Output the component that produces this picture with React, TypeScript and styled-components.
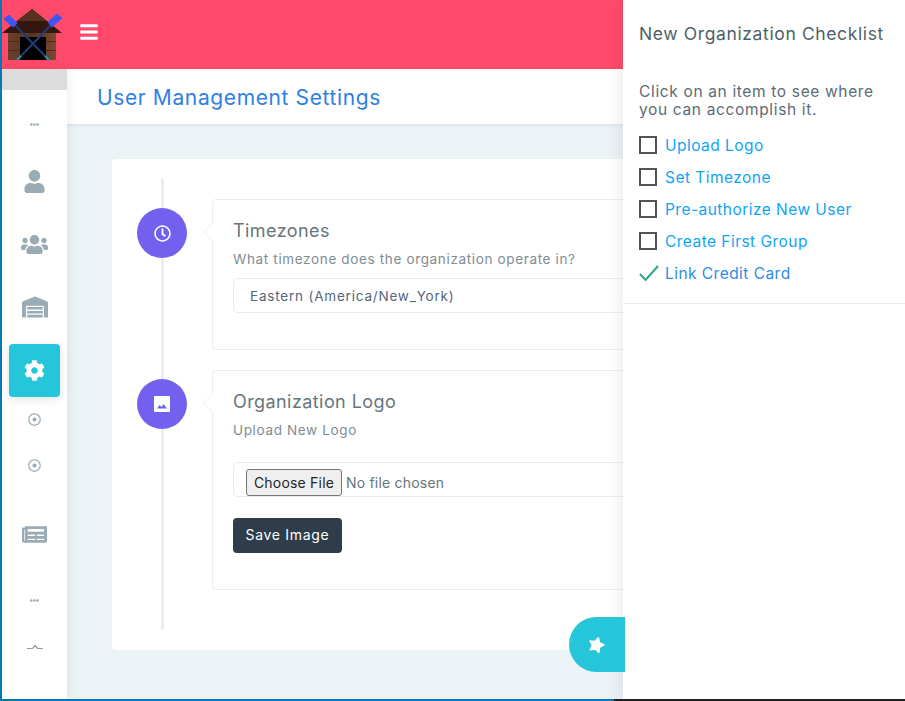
import React from "react";
import styled, { createGlobalStyle } from "styled-components";
import {
  FaUser,
  FaUsers,
  FaWarehouse,
  FaCog,
  FaNewspaper,
  FaRegDotCircle,
  FaRegClock,
  FaStar,
  FaBars,
  FaEllipsisH,
} from "react-icons/fa";

const Global = createGlobalStyle`
  html, body { margin: 0; padding: 0; background: #fff; }
  * { box-sizing: border-box; }
  body { font-family: Inter, "Open Sans", "Liberation Sans", sans-serif; color: #67757c; }
`;

const Frame = styled.div`
  position: relative;
  width: 905px;
  height: 701px;
  overflow: hidden;
  display: flex;
  flex-direction: column;
  border-left: 2px solid #0b76b4;
`;
const Screen = styled.div`
  flex: 1;
  min-height: 0;
  display: flex;
  flex-direction: column;
`;
const TopBar = styled.header`
  height: 69px;
  flex: none;
  background: #ff4a6b;
  display: flex;
  align-items: center;
`;
const LogoBox = styled.div`
  width: 65px;
  height: 69px;
  flex: none;
  display: flex;
  align-items: flex-start;
`;
const Burger = styled.span`
  display: flex;
  margin: 0 0 5px 12px;
  color: #fff;
  font-size: 20px;
`;
const Body = styled.div`
  flex: 1;
  min-height: 0;
  display: flex;
`;
const Sidebar = styled.nav`
  width: 65px;
  flex: none;
  background: #fff;
  display: flex;
  flex-direction: column;
  align-items: center;
  box-shadow: 1px 0 12px rgba(0, 0, 0, 0.08);
  position: relative;
  z-index: 1;
`;
const SideBand = styled.div`
  align-self: stretch;
  height: 21px;
  flex: none;
  background: #dcdcdc;
`;
const SideSlot = styled.div<{ $h: number; $size: number }>`
  height: ${(p) => p.$h}px;
  flex: none;
  display: flex;
  align-items: center;
  justify-content: center;
  color: #99abb4;
  font-size: ${(p) => p.$size}px;
`;
const ActiveItem = styled.div`
  width: 51px;
  height: 53px;
  flex: none;
  border-radius: 4px;
  background: #26c6da;
  color: #fff;
  font-size: 21px;
  display: flex;
  align-items: center;
  justify-content: center;
  box-shadow: 0 2px 8px rgba(0, 0, 0, 0.12);
`;
const Main = styled.main`
  flex: 1;
  min-width: 0;
  background: #ebf3f6;
  display: flex;
  flex-direction: column;
`;
const TitleBar = styled.div`
  height: 55px;
  flex: none;
  background: #fff;
  padding: 1px 0 0 30px;
  display: flex;
  align-items: center;
  box-shadow: 0 1px 3px rgba(0, 0, 0, 0.08);
`;
const PageTitle = styled.h1`
  margin: 0;
  font-size: 21px;
  font-weight: 400;
  letter-spacing: 0.62px;
  color: #2f80e4;
  white-space: nowrap;
`;
const Canvas = styled.div`
  padding: 35px 0 0 45px;
`;
const Sheet = styled.section`
  width: 700px;
  height: 491px;
  background: #fff;
  border-radius: 4px;
  padding: 20px 0 20px 25px;
`;
const Timeline = styled.div`
  display: flex;
  flex-direction: column;
  gap: 20px;
  height: 451px;
  position: relative;
  padding-top: 20px;
  &::before {
    content: "";
    position: absolute;
    left: 24px;
    top: 0;
    bottom: 0;
    width: 3px;
    background: #e9edf2;
  }
`;
const Entry = styled.article`
  display: flex;
  align-items: flex-start;
  position: relative;
`;
const Badge = styled.div`
  width: 50px;
  height: 50px;
  flex: none;
  margin-top: 9px;
  border-radius: 50%;
  background: #7460ee;
  color: #fff;
  display: flex;
  align-items: center;
  justify-content: center;
  font-size: 17px;
  position: relative;
  z-index: 1;
`;
const EntryCard = styled.div<{ $h: number }>`
  margin-left: 25px;
  flex: 1;
  height: ${(p) => p.$h}px;
  background: #fff;
  border: 1px solid #e9edf2;
  border-radius: 4px;
  padding: 19px 20px;
  position: relative;
  &::before {
    content: "";
    position: absolute;
    left: -7px;
    top: 25px;
    width: 13px;
    height: 13px;
    background: #fff;
    border-left: 1px solid #f1f3f6;
    border-bottom: 1px solid #f1f3f6;
    transform: rotate(45deg);
  }
`;
const CardTitle = styled.h2`
  margin: 0;
  font-size: 18px;
  line-height: 24px;
  font-weight: 400;
  letter-spacing: 0.42px;
  color: #67757c;
  white-space: nowrap;
`;
const CardNote = styled.p<{ $mb: number }>`
  margin: 6px 0 ${(p) => p.$mb}px;
  font-size: 13.5px;
  line-height: 20px;
  letter-spacing: 0.65px;
  color: #7f8c94;
  white-space: nowrap;
`;
const SelectField = styled.div`
  height: 35px;
  border: 1px solid #e9edf2;
  border-radius: 4px;
  padding-left: 16px;
  display: flex;
  align-items: center;
  font-size: 13.5px;
  letter-spacing: 0.8px;
  color: #54667a;
  white-space: nowrap;
`;
const FileField = styled.div`
  height: 35px;
  border: 1px solid #e9edf2;
  border-radius: 4px;
  padding: 6px 0 0 12px;
  font-size: 14px;
  color: #67757c;
  input {
    font-family: Inter, sans-serif;
    font-size: 14px;
    letter-spacing: 0.2px;
    color: #67757c;
    width: 300px;
    white-space: nowrap;
  }
  input::file-selector-button {
    font-family: Inter, sans-serif;
    font-size: 14px;
    letter-spacing: 0.2px;
    height: 27px;
    width: 96px;
    padding: 0;
    margin-right: 4px;
    color: #212529;
    background: #efefef;
    border: 1px solid #767676;
    border-radius: 3px;
  }
`;
const SaveButton = styled.button`
  display: block;
  margin-top: 21px;
  width: 109px;
  height: 35px;
  border: 0;
  border-radius: 4px;
  background: #2f3d4a;
  color: #fff;
  font-family: Inter, sans-serif;
  font-size: 14px;
  letter-spacing: 0.7px;
  padding: 0 0 2px;
`;
const Panel = styled.aside`
  position: absolute;
  top: 0;
  right: 0;
  width: 282px;
  height: 699px;
  background: #fff;
  box-shadow: -4px 0 14px rgba(0, 0, 0, 0.07);
  z-index: 2;
  display: flex;
  flex-direction: column;
`;
const PanelHead = styled.h3`
  margin: 0;
  height: 69px;
  flex: none;
  padding: 0 0 2px 16px;
  display: flex;
  align-items: center;
  font-size: 17.5px;
  font-weight: 400;
  letter-spacing: 0.62px;
  color: #4f5f69;
  white-space: nowrap;
`;
const PanelBody = styled.div`
  padding: 14px 16px 0;
  border-bottom: 1px solid #e9edf2;
  height: 235px;
  flex: none;
`;
const PanelIntro = styled.p`
  margin: 0 0 10px;
  font-size: 15.5px;
  line-height: 18px;
  letter-spacing: 0.65px;
  color: #5c6b75;
`;
const CheckRow = styled.a`
  height: 32px;
  display: flex;
  align-items: center;
  gap: 8px;
  white-space: nowrap;
`;
const CheckBox = styled.span`
  width: 18px;
  height: 18px;
  flex: none;
  border: 2px solid #555;
`;
const DoneMark = styled.svg`
  width: 20px;
  height: 16px;
  flex: none;
  margin: 0 -2px 0 0;
`;
const CheckLabel = styled.span<{ $done?: boolean }>`
  font-size: 15.5px;
  letter-spacing: 0.46px;
  color: ${(p) => (p.$done ? "#2f8be6" : "#0ea5f5")};
`;
const Fab = styled.button`
  position: absolute;
  left: 567px;
  top: 617px;
  width: 56px;
  height: 55px;
  padding: 0;
  border: 0;
  border-radius: 28px 0 0 28px;
  background: #26c6da;
  color: #fff;
  z-index: 3;
  display: flex;
  align-items: center;
  justify-content: center;
  font-size: 17px;
  svg { transform: rotate(16deg); margin-right: 1px; }
`;
const BottomEdge = styled.div`
  height: 2px;
  flex: none;
  display: flex;
  background: #0b76b4;
`;
const EdgeDark = styled.div`
  width: 291px;
  margin-left: auto;
  background: #222;
`;

const Logo = () => (
  <svg width="65" height="66" viewBox="0 0 65 66">
    <defs>
      <linearGradient id="wood" x1="0" x2="1" y1="0" y2="0">
        <stop offset="0" stopColor="#6b4029" />
        <stop offset="0.5" stopColor="#5a3421" />
        <stop offset="1" stopColor="#7a4a2f" />
      </linearGradient>
    </defs>
    <polygon points="30,9 0,33 60,33" fill="#33170f" />
    <polygon points="30,9 15,21 45,21" fill="#57301f" />
    <rect x="6" y="33" width="48" height="27" fill="url(#wood)" />
    <rect x="6" y="41" width="48" height="0.6" fill="#3a1c10" />
    <rect x="6" y="50" width="48" height="0.6" fill="#3a1c10" />
    <rect x="18" y="37" width="26" height="23" fill="#000" />
    <line x1="9" y1="21" x2="47" y2="60" stroke="#1b3f78" strokeWidth="2" />
    <line x1="53" y1="21" x2="15" y2="60" stroke="#1b3f78" strokeWidth="2" />
    <line x1="43" y1="56" x2="47" y2="60" stroke="#1f9ab0" strokeWidth="2" />
    <line x1="19" y1="56" x2="15" y2="60" stroke="#1f9ab0" strokeWidth="2" />
    <polygon points="2,19 7,15 15,23 11,27" fill="#3f55f2" stroke="#3f55f2" strokeLinejoin="round" />
    <polygon points="60,18 55,14 46,22 50,27" fill="#3f55f2" stroke="#3f55f2" strokeLinejoin="round" />
  </svg>
);

const ImageGlyph = () => (
  <svg width="16" height="16" viewBox="0 0 16 16">
    <rect width="16" height="16" rx="1" fill="#fff" />
    <path d="M3 12.5l2.6-3.4 1.9 2 2-3.1 3.5 4.5z" fill="#7460ee" />
  </svg>
);

const Cut = () => (
  <svg width="18" height="6" viewBox="0 0 18 6">
    <path d="M1 4.5h5.5L9 1.5l2.5 3H17" fill="none" stroke="#8a9ca6" strokeWidth="1.2" />
  </svg>
);

const items = [
  { label: "Upload Logo" },
  { label: "Set Timezone" },
  { label: "Pre-authorize New User" },
  { label: "Create First Group" },
  { label: "Link Credit Card", done: true },
];

export default function App() {
  return (
    <Frame>
      <Global />
      <Screen>
        <TopBar>
          <LogoBox>
            <Logo />
          </LogoBox>
          <Burger>
            <FaBars />
          </Burger>
        </TopBar>
        <Body>
          <Sidebar>
            <SideBand />
            <SideSlot $h={69} $size={9}><FaEllipsisH /></SideSlot>
            <SideSlot $h={45} $size={23}><FaUser /></SideSlot>
            <SideSlot $h={81} $size={27}><FaUsers /></SideSlot>
            <SideSlot $h={43} $size={26}><FaWarehouse /></SideSlot>
            <SideSlot $h={16} $size={1} />
            <ActiveItem><FaCog /></ActiveItem>
            <SideSlot $h={44} $size={13}><FaRegDotCircle /></SideSlot>
            <SideSlot $h={48} $size={13}><FaRegDotCircle /></SideSlot>
            <SideSlot $h={90} $size={25}><FaNewspaper /></SideSlot>
            <SideSlot $h={42} $size={9}><FaEllipsisH /></SideSlot>
            <SideSlot $h={52} $size={9}><Cut /></SideSlot>
          </Sidebar>
          <Main>
            <TitleBar>
              <PageTitle>User Management Settings</PageTitle>
            </TitleBar>
            <Canvas>
              <Sheet>
                <Timeline>
                  <Entry>
                    <Badge><FaRegClock /></Badge>
                    <EntryCard $h={151}>
                      <CardTitle>Timezones</CardTitle>
                      <CardNote $mb={9}>What timezone does the organization operate in?</CardNote>
                      <SelectField>Eastern (America/New_York)</SelectField>
                    </EntryCard>
                  </Entry>
                  <Entry>
                    <Badge><ImageGlyph /></Badge>
                    <EntryCard $h={220}>
                      <CardTitle>Organization Logo</CardTitle>
                      <CardNote $mb={22}>Upload New Logo</CardNote>
                      <FileField>
                        <input type="file" />
                      </FileField>
                      <SaveButton>Save Image</SaveButton>
                    </EntryCard>
                  </Entry>
                </Timeline>
              </Sheet>
            </Canvas>
          </Main>
        </Body>
      </Screen>
      <BottomEdge>
        <EdgeDark />
      </BottomEdge>
      <Panel>
        <PanelHead>New Organization Checklist</PanelHead>
        <PanelBody>
          <PanelIntro>Click on an item to see where you can accomplish it.</PanelIntro>
          {items.map((it) => (
            <CheckRow key={it.label}>
              {it.done ? (
                <DoneMark viewBox="0 0 20 16">
                  <path d="M1 9l5.5 6L19 1" fill="none" stroke="#2fa58c" strokeWidth="2" />
                </DoneMark>
              ) : (
                <CheckBox />
              )}
              <CheckLabel $done={it.done}>{it.label}</CheckLabel>
            </CheckRow>
          ))}
        </PanelBody>
      </Panel>
      <Fab>
        <FaStar />
      </Fab>
    </Frame>
  );
}
